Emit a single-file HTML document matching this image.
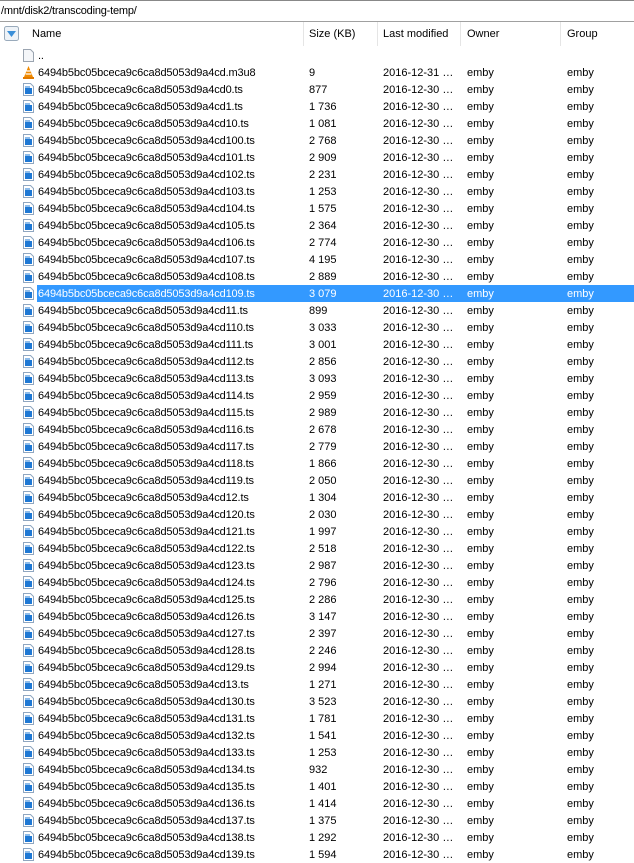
<!DOCTYPE html>
<html><head><meta charset="utf-8"><style>
*{margin:0;padding:0;box-sizing:border-box}
body{width:634px;height:857px;overflow:hidden;background:#fff;font-family:"Liberation Sans",sans-serif;font-size:11px;color:#000;position:relative}
#path{position:absolute;left:0;top:0;width:634px;height:22px;border-top:1px solid #888;border-bottom:1px solid #a0a0a0;padding:4px 0 0 1px;letter-spacing:-0.2px}
#hdr{position:absolute;left:0;top:22px;width:634px;height:24px}
#hdr span{position:absolute;top:6px}
.sep{position:absolute;top:0;width:1px;height:24px;background:#e5e5e5}
.row{position:absolute;left:0;width:634px;height:17px}
.row span{position:absolute;top:3px;white-space:nowrap}
.row span.n{letter-spacing:-0.14px}
.sel{background:#3399ff;color:#fff}
.ic{position:absolute;left:23px;top:2px;width:11px;height:13px}
</style></head><body>
<div id="path">/mnt/disk2/transcoding-temp/</div>
<div id="hdr">
<svg style="position:absolute;left:4px;top:4px" width="15" height="15"><rect x="0.5" y="0.5" width="14" height="14" rx="2" fill="#eef3f8" stroke="#9ab"/><path d="M3 5h9l-4.5 6z" fill="#3a8fd8"/></svg>
<span style="left:32px">Name</span><span style="left:309px">Size (KB)</span><span style="left:383px">Last modified</span><span style="left:467px">Owner</span><span style="left:567px">Group</span>
<div class="sep" style="left:303px"></div><div class="sep" style="left:377px"></div><div class="sep" style="left:460px"></div><div class="sep" style="left:560px"></div>
</div>
<div id="rows"></div>
<script>
var d=[["..","","",""],["6494b5bc05bceca9c6ca8d5053d9a4cd.m3u8","9","2016-12-31 …","v"]];
var s=[["0","877"],["1","1 736"],["10","1 081"],["100","2 768"],["101","2 909"],["102","2 231"],["103","1 253"],["104","1 575"],["105","2 364"],["106","2 774"],["107","4 195"],["108","2 889"],["109","3 079"],["11","899"],["110","3 033"],["111","3 001"],["112","2 856"],["113","3 093"],["114","2 959"],["115","2 989"],["116","2 678"],["117","2 779"],["118","1 866"],["119","2 050"],["12","1 304"],["120","2 030"],["121","1 997"],["122","2 518"],["123","2 987"],["124","2 796"],["125","2 286"],["126","3 147"],["127","2 397"],["128","2 246"],["129","2 994"],["13","1 271"],["130","3 523"],["131","1 781"],["132","1 541"],["133","1 253"],["134","932"],["135","1 401"],["136","1 414"],["137","1 375"],["138","1 292"],["139","1 594"]];
s.forEach(function(a){d.push(["6494b5bc05bceca9c6ca8d5053d9a4cd"+a[0]+".ts",a[1],"2016-12-30 …","t"])});
var h="";
d.forEach(function(r,i){
var y=47+i*17,sel=r[0].indexOf("cd109.")>0;
var ic;
if(i==0)ic='<svg class="ic" viewBox="0 0 11 13"><path d="M.5 .5h7l3 3v9h-10z" fill="#f4f6f9" stroke="#9aa4b0"/></svg>';
else if(r[3]=="v")ic='<svg class="ic" viewBox="0 0 11 13"><path d="M5.5 0L1 11h9z" fill="#f08a00"/><path d="M3.5 5h4M2.6 8h5.8" stroke="#fff" stroke-width="1.3"/><rect x="0" y="11" width="11" height="2" fill="#e07a00"/></svg>';
else ic='<svg class="ic" viewBox="0 0 11 13"><path d="M.5 .5h7l3 3v9h-10z" fill="#fff" stroke="#8fa6c0"/><rect x="2" y="5" width="7" height="6" fill="#1e78d4"/><path d="M2 4h5" stroke="#1e78d4"/></svg>';
h+='<div class="row" style="top:'+y+'px">'+ic+(sel?'<div class="sel" style="position:absolute;left:37px;top:0;width:597px;height:17px"></div>':'')+
'<span class="n" style="left:38px'+(sel?';color:#fff':'')+'">'+r[0]+'</span>'+
(r[1]?'<span style="left:309px'+(sel?';color:#fff':'')+'">'+r[1]+'</span><span style="left:383px'+(sel?';color:#fff':'')+'">'+r[2]+'</span><span style="left:467px'+(sel?';color:#fff':'')+'">emby</span><span style="left:567px'+(sel?';color:#fff':'')+'">emby</span>':'')+'</div>';
});
document.getElementById("rows").innerHTML=h;
</script>
</body></html>
